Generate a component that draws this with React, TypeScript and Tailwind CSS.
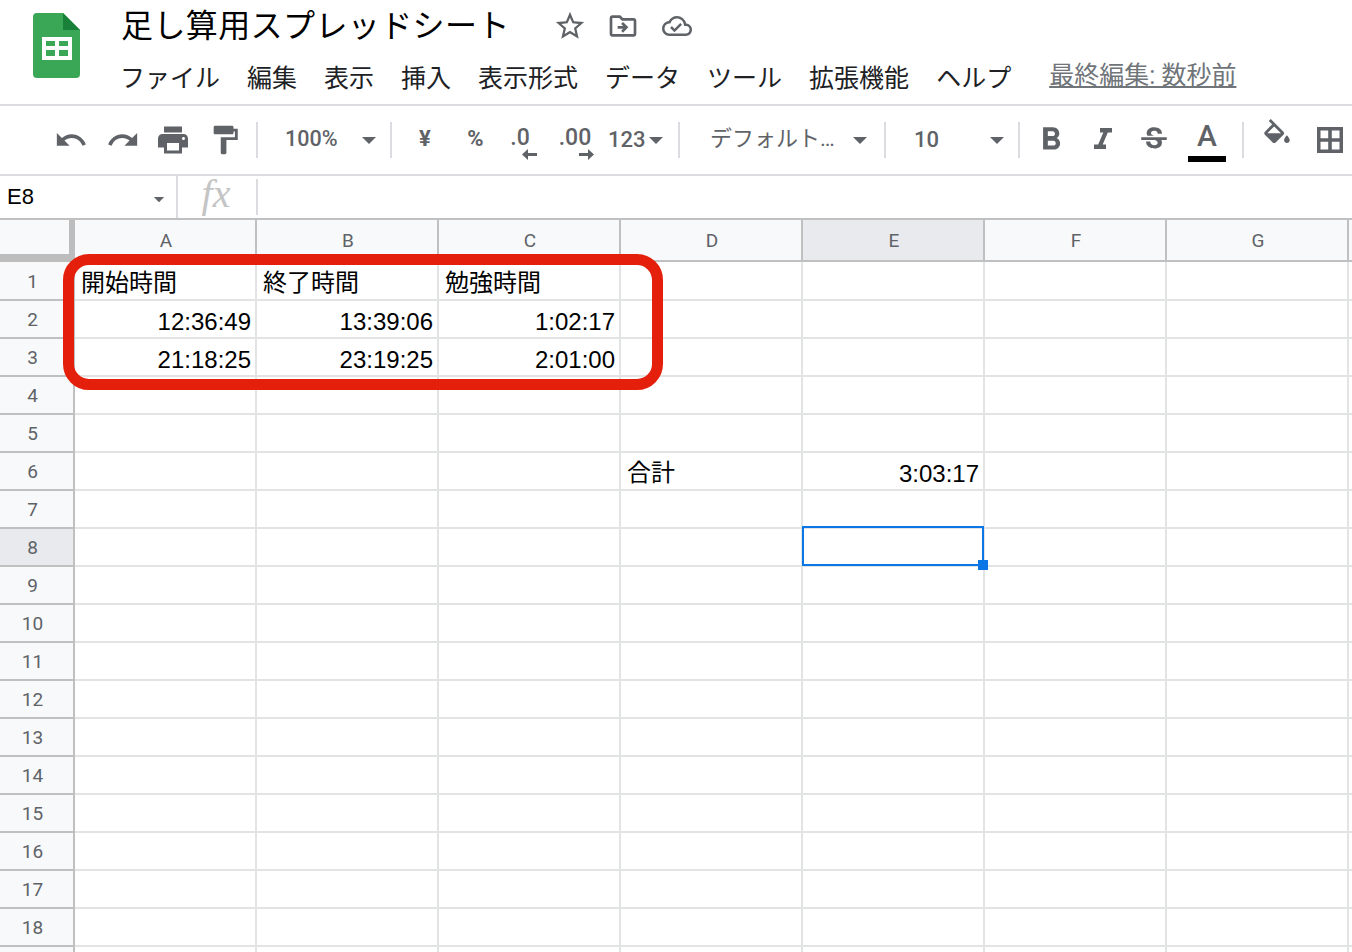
import type { ReactNode } from 'react';
import {
  MdUndo,
  MdRedo,
  MdPrint,
  MdFormatPaint,
  MdStarBorder,
  MdOutlineDriveFileMove,
  MdOutlineCloudDone,
  MdFormatBold,
  MdFormatItalic,
  MdStrikethroughS,
} from 'react-icons/md';

const menus = ['ファイル', '編集', '表示', '挿入', '表示形式', 'データ', 'ツール', '拡張機能', 'ヘルプ'];
const columns = ['A', 'B', 'C', 'D', 'E', 'F', 'G', ''];
const rowNumbers = Array.from({ length: 19 }, (_, i) => i + 1);

const cells: Record<string, { text: string; right?: boolean }> = {
  A1: { text: '開始時間' },
  B1: { text: '終了時間' },
  C1: { text: '勉強時間' },
  A2: { text: '12:36:49', right: true },
  B2: { text: '13:39:06', right: true },
  C2: { text: '1:02:17', right: true },
  A3: { text: '21:18:25', right: true },
  B3: { text: '23:19:25', right: true },
  C3: { text: '2:01:00', right: true },
  D6: { text: '合計' },
  E6: { text: '3:03:17', right: true },
};

function SheetsLogo() {
  return (
    <svg width="47" height="65" viewBox="0 0 47 65" className="shrink-0">
      <path d="M4 0h26l17 17v44a4 4 0 0 1-4 4H4a4 4 0 0 1-4-4V4a4 4 0 0 1 4-4z" fill="#3aa757" />
      <path d="M30 0l17 17H30z" fill="#188038" />
      <path d="M9 24h30v23H9z" fill="#fff" />
      <path d="M13 28h9v5h-9zM26 28h9v5h-9zM13 37h9v6h-9zM26 37h9v6h-9z" fill="#3aa757" />
    </svg>
  );
}

function Caret({ className = '' }: { className?: string }) {
  return (
    <svg width="14" height="7" viewBox="0 0 14 7" className={className}>
      <path d="M0 0h14L7 7z" fill="#5f6368" />
    </svg>
  );
}

function Sep({ className = '' }: { className?: string }) {
  return <div className={`w-[2px] h-[36px] bg-[#dadce0] shrink-0 ${className}`} />;
}

function Tool({ w, children }: { w: string; children: ReactNode }) {
  return <div className={`${w} h-full shrink-0 flex items-center justify-center text-[#5f6368]`}>{children}</div>;
}

function DecimalIcon({ label, dir }: { label: string; dir: 'left' | 'right' }) {
  return (
    <div className="relative text-[23px] font-medium leading-none -mt-[6px]">
      {label}
      <svg
        width="15"
        height="11"
        viewBox="0 0 15 11"
        className={`absolute top-[23px] ${dir === 'left' ? 'right-[-7px]' : 'right-[-3px]'}`}
      >
        {dir === 'left' ? (
          <path d="M15 4H6V0L0 5.500l6 5.500V7h9z" fill="#5f6368" />
        ) : (
          <path d="M0 4h9V0l6 5.500-6 5.500V7H0z" fill="#5f6368" />
        )}
      </svg>
    </div>
  );
}

function Toolbar() {
  return (
    <div className="h-[68px] flex items-center pl-[45px] border-b-[2px] border-[#dadce0] box-content">
      <Tool w="w-[52px]"><MdUndo size={34} /></Tool>
      <Tool w="w-[52px]"><MdRedo size={34} /></Tool>
      <Tool w="w-[47px]"><MdPrint size={36} /></Tool>
      <Tool w="w-[58px]"><MdFormatPaint size={34} /></Tool>
      <Sep className="ml-[2px]" />
      <div className="w-[27px]" />
      <div className="w-[54px] text-[21.500px] font-medium text-[#5f6368] -mt-[2px]">100%</div>
      <Caret className="ml-[23px]" />
      <Sep className="ml-[14px]" />
      <Tool w="w-[66px]"><span className="text-[22px] font-bold -mt-[3px]">¥</span></Tool>
      <Tool w="w-[35px]"><span className="text-[22px] font-bold -mt-[3px]">%</span></Tool>
      <Tool w="w-[54px]"><DecimalIcon label=".0" dir="left" /></Tool>
      <Tool w="w-[56px]"><DecimalIcon label=".00" dir="right" /></Tool>
      <div className="ml-[5px] w-[38px] text-[22px] font-medium text-[#5f6368] -mt-[2px]">123</div>
      <Caret className="ml-[3px]" />
      <Sep className="ml-[15px]" />
      <div className="ml-[30px] w-[125px] text-[22px] text-[#5f6368] whitespace-nowrap -mt-[3px]">デフォルト…</div>
      <Caret className="ml-[18px]" />
      <Sep className="ml-[17px]" />
      <div className="ml-[28px] w-[26px] text-[22px] font-medium text-[#5f6368] -mt-[2px]">10</div>
      <Caret className="ml-[50px]" />
      <Sep className="ml-[14px]" />
      <Tool w="w-[62px]"><MdFormatBold size={38} /></Tool>
      <Tool w="w-[42px]"><MdFormatItalic size={36} /></Tool>
      <Tool w="w-[60px]"><MdStrikethroughS size={34} /></Tool>
      <div className="w-[38px] ml-[4px] h-full flex flex-col items-center">
        <span className="text-[30px] font-medium text-[#5f6368] leading-none mt-[15px]">A</span>
        <div className="w-[38px] h-[6px] bg-black mt-[5px]" />
      </div>
      <Sep className="ml-[16px]" />
      <Tool w="w-[66px]">
        <svg width="34" height="34" viewBox="0 0 24 24" className="-mt-[8px]" fill="#5f6368">
          <path d="M16.56 8.94L7.62 0 6.21 1.410l2.380 2.380-5.150 5.150c-.590.590-.590 1.540 0 2.120l5.500 5.500c.290.290.680.440 1.060.440s.770-.150 1.060-.440l5.500-5.500c.590-.580.590-1.530 0-2.120zM5.210 10L10 5.210 14.790 10H5.210zM19 11.500s-2 2.170-2 3.500c0 1.100.900 2 2 2s2-.900 2-2c0-1.330-2-3.500-2-3.500z" />
        </svg>
      </Tool>
      <Tool w="w-[40px]">
        <svg width="26" height="26" viewBox="0 0 26 26" fill="#5f6368">
          <path fillRule="evenodd" d="M0 0h26v26H0zM3.500 3.500v7.700h7.700V3.500zm11.300 0v7.700h7.700V3.500zM3.500 14.800v7.700h7.700v-7.700zm11.300 0v7.700h7.700v-7.700z" />
        </svg>
      </Tool>
    </div>
  );
}

function Grid() {
  return (
    <div className="relative">
      <div className="flex h-[42px] border-t-[2px] border-[#c0c0c0] box-content">
        <div className="w-[75px] shrink-0 bg-[#f8f9fa] border-r-[6px] border-b-[8px] border-[#bdbdbd]" />
        {columns.map((c, i) => (
          <div
            key={i}
            className={`w-[182px] shrink-0 flex items-center justify-center pl-[2px] pt-[3px] text-[19px] text-[#5f6368] border-r-[2px] border-b-[2px] border-[#c0c0c0] ${
              c === 'E' ? 'bg-[#e8eaed]' : 'bg-[#f8f9fa]'
            }`}
          >
            {c}
          </div>
        ))}
      </div>
      {rowNumbers.map((r) => (
        <div key={r} className={`flex ${r === 1 ? 'h-[39px]' : 'h-[38px]'}`}>
          <div
            className={`w-[75px] shrink-0 flex items-center justify-center pr-[8px] pt-[3px] text-[19px] text-[#5f6368] border-r-[2px] border-b-[2px] border-[#c0c0c0] ${
              r === 8 ? 'bg-[#e8eaed]' : 'bg-[#f8f9fa]'
            }`}
          >
            {r < 19 ? r : ''}
          </div>
          {columns.map((c, i) => {
            const cell = cells[`${c}${r}`];
            return (
              <div
                key={i}
                className={`w-[182px] shrink-0 flex items-end border-r-[2px] border-b-[2px] border-[#e2e3e3] font-['Liberation_Sans','Noto_Sans_CJK_JP',sans-serif] text-[24px] text-black ${
                  cell?.right ? 'justify-end pr-[4px] leading-[30px]' : 'pl-[6px] leading-[32px]'
                }`}
              >
                {cell?.text}
              </div>
            );
          })}
        </div>
      ))}
      <div className="absolute left-[63px] top-[36px] w-[600px] h-[136px] border-[11px] border-[#e4200c] rounded-[26px]" />
      <div className="absolute left-[802px] top-[308px] w-[182px] h-[40px] border-[2px] border-[#0b76e6]" />
      <div className="absolute left-[978px] top-[342px] w-[10px] h-[10px] bg-[#0b76e6]" />
    </div>
  );
}

export default function App() {
  return (
    <div className="w-[1352px] h-[952px] overflow-hidden bg-white font-[Roboto,'Noto_Sans_CJK_JP',sans-serif]">
      <div className="h-[104px] flex border-b-[2px] border-[#dadce0] box-content">
        <div className="ml-[33px] mt-[13px]">
          <SheetsLogo />
        </div>
        <div className="ml-[41px] flex flex-col">
          <div className="h-[52px] flex items-center text-[32px] tracking-[0.4px] text-black">
            <span className="w-[432px] whitespace-nowrap">足し算用スプレッドシート</span>
            <div className="flex items-center text-[#5f6368]">
              <MdStarBorder size={34} />
              <MdOutlineDriveFileMove size={32} className="ml-[20px]" />
              <MdOutlineCloudDone size={30} className="ml-[23px]" />
            </div>
          </div>
          <div className="flex items-center h-[52px] -ml-[1px] mt-[2px] text-[25px] text-[#202124] gap-[27px] whitespace-nowrap">
            {menus.map((m) => (
              <span key={m}>{m}</span>
            ))}
            <span className="ml-[11px] -mt-[6px] text-[#70757a] underline">最終編集: 数秒前</span>
          </div>
        </div>
      </div>
      <Toolbar />
      <div className="h-[42px] flex items-center">
        <div className="w-[176px] h-full shrink-0 flex items-center pl-[7px] text-[22px] text-black">
          <span className="w-[145px] -mt-[1px] font-['Liberation_Sans',sans-serif]">E8</span>
          <Caret className="scale-75 mt-[4px]" />
        </div>
        <div className="w-[2px] h-full bg-[#dadce0]" />
        <div className="w-[78px] h-full flex items-center justify-center -mt-[7px] -ml-[1px] font-['Liberation_Serif',serif] italic text-[40px] text-[#c4c4c4]">
          fx
        </div>
        <Sep className="h-[30px] ml-[1px]" />
      </div>
      <Grid />
    </div>
  );
}
